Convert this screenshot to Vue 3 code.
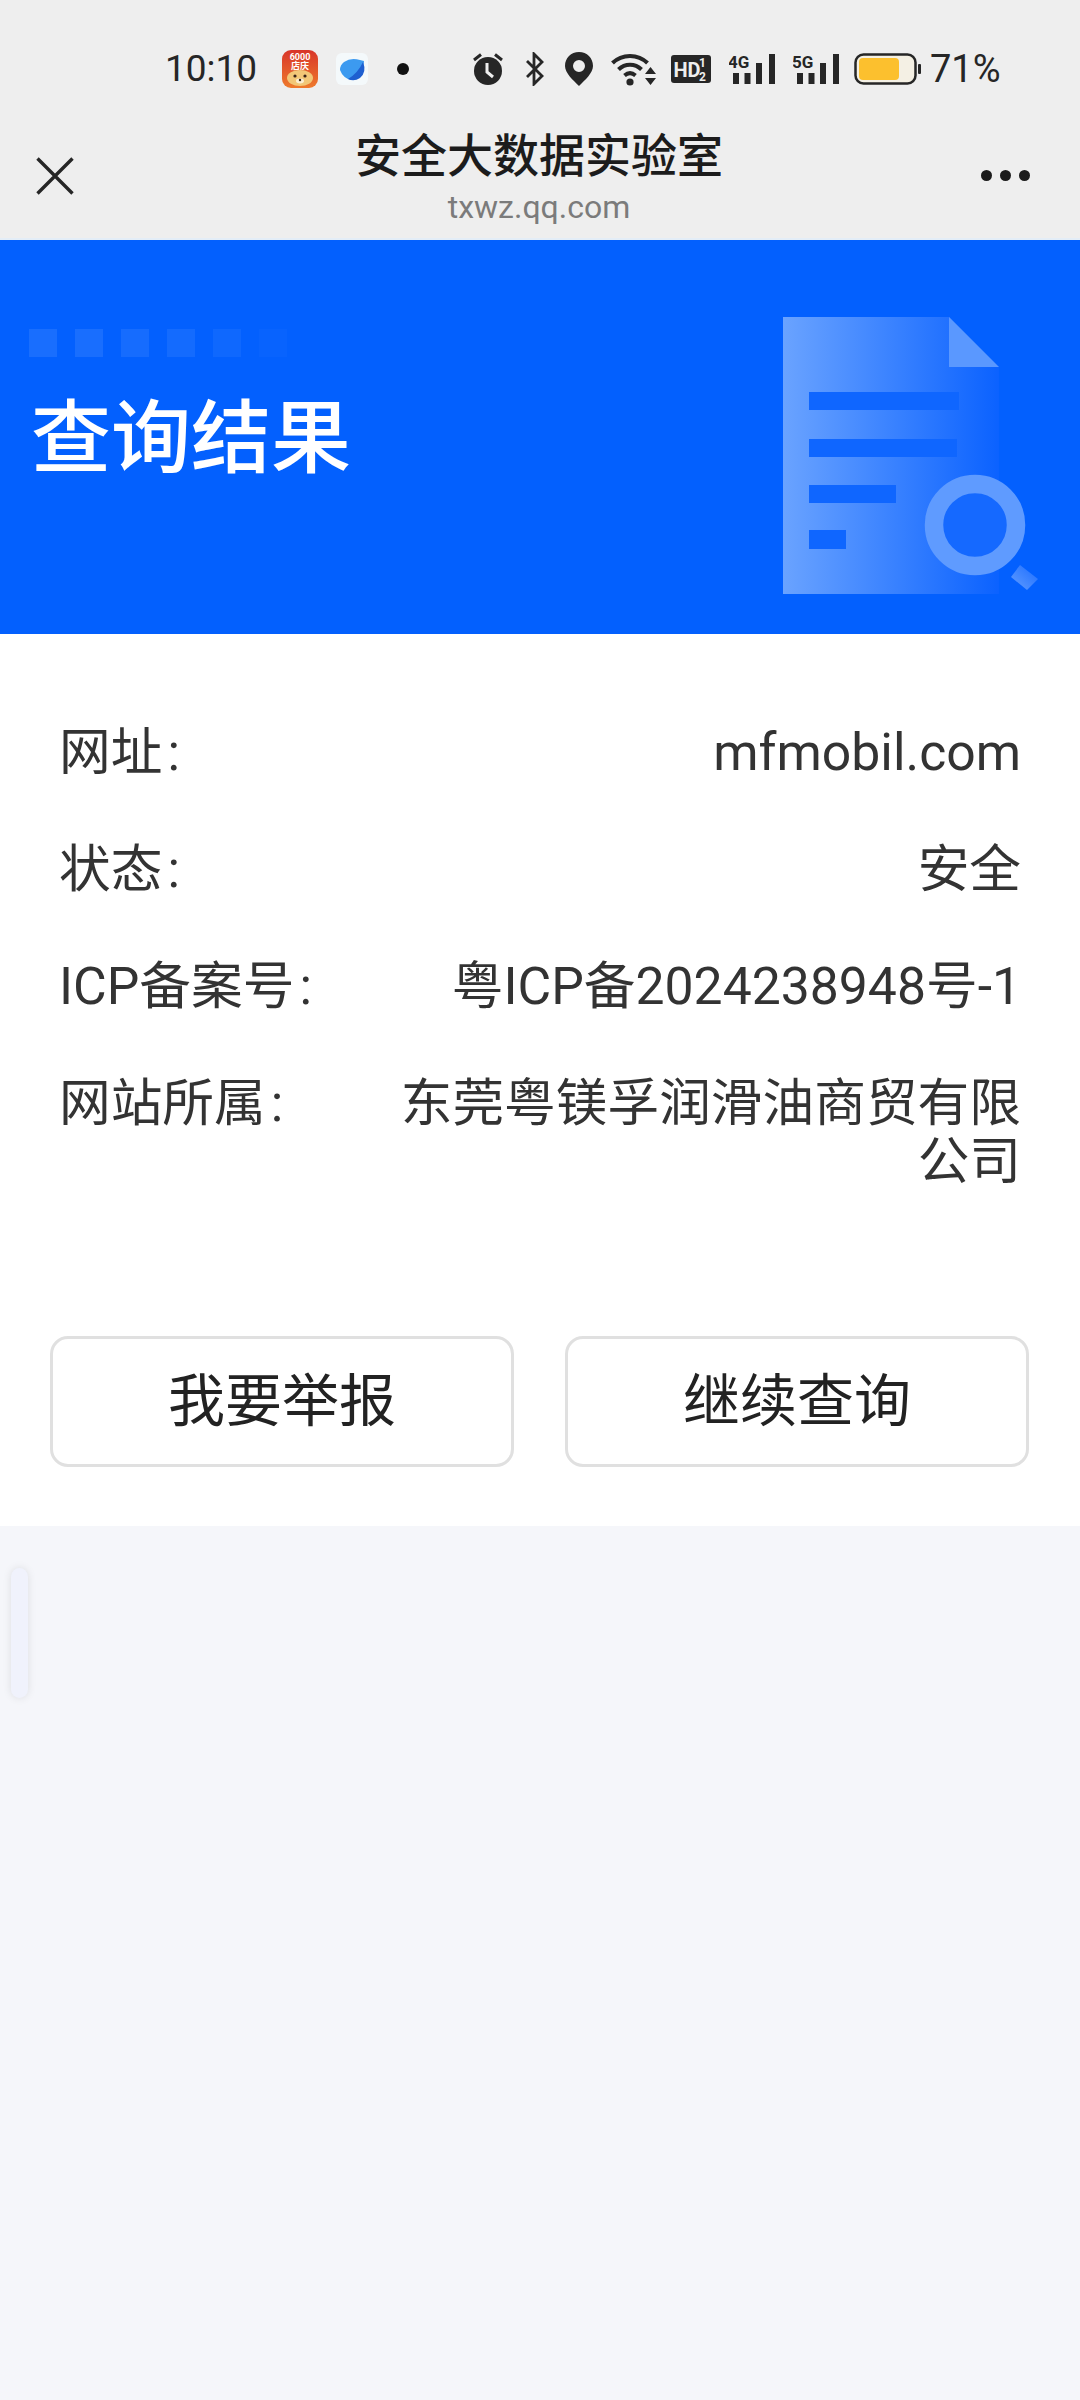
<script setup>
const rows = [
  { label: '网址', value: 'mfmobil.com' },
  { label: '状态', value: '安全' },
  { label: 'ICP备案号', value: '粤ICP备2024238948号-1' },
  { label: '网站所属', value: '东莞粤镁孚润滑油商贸有限公司' },
]
const squares = [0.09, 0.09, 0.08, 0.07, 0.05, 0.025]
const signals = ['4G', '5G']
</script>

<template>
  <div class="page">
    <div class="statusbar">
      <span class="time">10:10</span>

      <svg class="ic-tiger" width="36" height="38" viewBox="0 0 36 38">
        <defs>
          <linearGradient id="tigerBg" x1="0" y1="0" x2="0" y2="1">
            <stop offset="0" stop-color="#d8352a" />
            <stop offset="1" stop-color="#ee7a2c" />
          </linearGradient>
        </defs>
        <rect width="36" height="38" rx="9" fill="url(#tigerBg)" />
        <text x="18" y="10" text-anchor="middle" class="tiger-text">6000</text>
        <text x="18" y="19" text-anchor="middle" class="tiger-text">店庆</text>
        <ellipse cx="18" cy="28" rx="13" ry="8" fill="#f2c777" />
        <circle cx="13" cy="26" r="1.6" fill="#3a2418" />
        <circle cx="23" cy="26" r="1.6" fill="#3a2418" />
        <ellipse cx="18" cy="31" rx="4" ry="2.4" fill="#fbeed2" />
        <circle cx="18" cy="30" r="1.2" fill="#3a2418" />
      </svg>

      <svg class="ic-planet" width="32" height="32" viewBox="0 0 32 32">
        <rect width="32" height="32" rx="6" fill="#f4f9fb" />
        <path d="M8 9 Q15 4 24 7 L28 8 L27 17 Q24 26 15 27 Q7 25 4 17 Q4 12 8 9Z" fill="#3c9af0" />
        <path d="M12 26 Q22 20 27 9 Q31 19 24 25 Q18 29 12 26Z" fill="#1e5fd0" />
      </svg>

      <span class="dot"></span>

      <svg class="ic-alarm" width="30" height="34" viewBox="0 0 30 34">
        <circle cx="15" cy="19" r="14" fill="#262626" />
        <path d="M1 8 L8 2.5 M29 8 L22 2.5" stroke="#262626" stroke-width="3" />
        <path d="M14 11 V20 L20 25" fill="none" stroke="#eee" stroke-width="3" />
      </svg>

      <svg class="ic-bt" width="20" height="34" viewBox="0 0 20 34">
        <path d="M2 9 L17 24 L9 32 V2 L17 10 L2 25" fill="none" stroke="#262626" stroke-width="2.8" />
      </svg>

      <svg class="ic-pin" width="28" height="34" viewBox="0 0 28 34">
        <path fill-rule="evenodd" d="M14 0 C22 0 28 6 28 14 C28 21 20 28 14 34 C8 28 0 21 0 14 C0 6 6 0 14 0Z M14 8 A6 6 0 1 0 14 20 A6 6 0 1 0 14 8Z" fill="#262626" />
      </svg>

      <svg class="ic-wifi" width="46" height="34" viewBox="0 0 46 34">
        <g fill="none" stroke="#262626" stroke-width="4">
          <path d="M1.5 11 C11 1.5 27 1.5 36.5 11" />
          <path d="M7.5 17.5 C14 11 24 11 30.5 17.5" />
          <path d="M13.5 23.5 C17 20.5 21 20.5 24.5 23.5" />
        </g>
        <circle cx="19" cy="30" r="3.6" fill="#262626" />
        <path d="M34 22 L39.5 15 L45 22Z M34 26 L45 26 L39.5 33Z" fill="#262626" />
      </svg>

      <svg class="ic-hd" width="40" height="28" viewBox="0 0 40 28">
        <rect width="40" height="28" rx="3" fill="#262626" />
        <text x="2.5" y="22" class="hd-text">HD</text>
        <text x="28" y="12" class="hd-small">1</text>
        <text x="28" y="26" class="hd-small">2</text>
      </svg>

      <svg v-for="s in signals" :key="s" class="ic-signal" width="46" height="32" viewBox="0 0 46 32">
        <text x="-1" y="15" class="signal-text">{{ s }}</text>
        <rect x="4" y="20" width="6" height="11" fill="#262626" />
        <rect x="15.5" y="20" width="6" height="11" fill="#262626" />
        <rect x="27" y="10" width="6" height="21" fill="#262626" />
        <rect x="40" y="1" width="6" height="30" fill="#262626" />
      </svg>

      <svg class="ic-battery" width="67" height="32" viewBox="0 0 67 32">
        <rect x="1.5" y="1.5" width="60" height="29" rx="8" fill="#f4f0e4" stroke="#262626" stroke-width="2.5" />
        <rect x="5" y="5" width="40" height="22" rx="4" fill="#fcc02e" />
        <rect x="64" y="11" width="3" height="10" rx="1" fill="#262626" />
      </svg>

      <span class="percent">71%</span>
    </div>

    <div class="navbar">
      <svg class="close" width="38" height="38" viewBox="0 0 38 38">
        <path d="M1.5 1.5 L36.5 36.5 M36.5 1.5 L1.5 36.5" stroke="#262626" stroke-width="3.4" />
      </svg>
      <div class="nav-title">
        <div class="title">安全大数据实验室</div>
        <div class="url">txwz.qq.com</div>
      </div>
      <div class="more"><i></i><i></i><i></i></div>
    </div>

    <div class="banner">
      <div class="banner-text">
        <div class="squares">
          <span v-for="(o, i) in squares" :key="i" :style="{ opacity: o }"></span>
        </div>
        <h1>查询结果</h1>
      </div>
      <svg class="doc" width="260" height="290" viewBox="0 0 260 290">
        <defs>
          <linearGradient id="docFill" x1="0" y1="0" x2="1" y2="0">
            <stop offset="0" stop-color="#6aa3ff" />
            <stop offset="1" stop-color="#0b62ff" />
          </linearGradient>
          <linearGradient id="handleFill" x1="0" y1="1" x2="1" y2="0">
            <stop offset="0" stop-color="#629dff" />
            <stop offset="1" stop-color="#1a6cff" />
          </linearGradient>
        </defs>
        <path d="M0 0 H166 L216 50 V277 H0Z" fill="url(#docFill)" />
        <path d="M166 0 L216 50 H166Z" fill="#5a98ff" />
        <rect x="26" y="75" width="150" height="18" fill="#0f66ff" />
        <rect x="26" y="122" width="148" height="18" fill="#0f66ff" />
        <rect x="26" y="168" width="87" height="18" fill="#0f66ff" />
        <rect x="26" y="213" width="37" height="19" fill="#0f66ff" />
        <circle cx="192" cy="208" r="41" fill="#1569ff" stroke="#5f9bff" stroke-width="18.5" />
        <path d="M237 248 L255 262 L244 273 L228 260Z" fill="url(#handleFill)" />
      </svg>
    </div>

    <div class="result">
      <div v-for="r in rows" :key="r.label" class="row">
        <span class="label">{{ r.label }}<span class="colon">:</span></span>
        <span class="value">{{ r.value }}</span>
      </div>
      <div class="actions">
        <div class="btn">我要举报</div>
        <div class="btn">继续查询</div>
      </div>
    </div>

    <div class="edge-pill"></div>
  </div>
</template>

<style>
html, body { margin: 0; background: #f5f6fa; }
</style>

<style scoped>
.page {
  position: relative;
  width: 1080px;
  height: 2400px;
  overflow: hidden;
  background: #f5f6fa;
  font-family: Roboto, "Noto Sans CJK SC", sans-serif;
  color: #262626;
}

.statusbar {
  display: flex;
  align-items: center;
  height: 90px;
  padding: 48px 0 0 165px;
  box-sizing: border-box;
  background: #eeeeee;
}
.time { font-size: 37px; width: 117px; line-height: 44px; }
.ic-planet { margin-left: 18px; }
.dot { width: 12px; height: 12px; border-radius: 50%; background: #111; margin: 0 64px 0 29px; }
.ic-bt { margin-left: 22px; }
.ic-pin { margin-left: 20px; }
.ic-wifi { margin-left: 18px; }
.ic-hd { margin-left: 14px; }
.ic-signal { margin-left: 18px; }
.ic-battery { margin-left: 15px; }
.percent { font-size: 38px; margin-left: 9px; line-height: 42px; }

.tiger-text { font-size: 9px; fill: #fff; font-weight: 700; }
.hd-text { font-size: 20px; font-weight: 700; fill: #eee; font-family: "Liberation Sans Narrow", Roboto, sans-serif; }
.hd-small { font-size: 12px; font-weight: 700; fill: #eee; }
.signal-text { font-size: 17px; font-weight: 700; fill: #262626; }

.navbar {
  display: grid;
  grid-template-columns: 1fr auto 1fr;
  align-items: start;
  height: 150px;
  padding: 0 50px;
  box-sizing: border-box;
  background: #eeeeee;
  border-bottom: 2px solid #e3edf7;
}
.close { margin: 67px 0 0 -14px; }
.nav-title { text-align: center; padding: 33px 2px 0 0; }
.title { font-size: 46px; line-height: 58px; font-weight: 500; color: #1c1c1c; font-family: "Noto Sans CJK SC", sans-serif; }
.url { font-size: 32px; line-height: 42px; margin-top: 5px; color: #7b7b7b; }
.more { display: flex; justify-self: end; gap: 8px; margin-top: 80px; }
.more i { width: 11px; height: 11px; border-radius: 50%; background: #1c1c1c; }

.banner {
  display: flex;
  justify-content: space-between;
  height: 394px;
  padding: 77px 0 0 29px;
  box-sizing: border-box;
  background: #0360fe;
}
.banner-text { padding-top: 12px; }
.squares { display: flex; gap: 18px; }
.squares span { width: 28px; height: 28px; background: #fff; }
.banner h1 {
  margin: 24px 0 0 2px;
  font-size: 80px;
  line-height: 100px;
  font-weight: 500;
  color: #fff;
  font-family: "Noto Sans CJK SC", sans-serif;
}
.doc { margin-right: 37px; flex: none; }

.result { padding: 90px 59px 59px; background: #fff; }
.row {
  display: flex;
  justify-content: space-between;
  font-size: 51.7px;
  line-height: 58px;
  margin-bottom: 59px;
  color: #333;
}
.label { flex: none; }
.colon { margin-left: 5px; }
.value { width: 622px; text-align: right; }
.actions { display: flex; gap: 51px; margin: 145px -8px 0 -9px; }
.btn {
  flex: 1;
  height: 131px;
  line-height: 125px;
  box-sizing: border-box;
  border: 3px solid #e0e0e0;
  border-radius: 18px;
  text-align: center;
  font-size: 57px;
  color: #222;
}

.edge-pill {
  position: absolute;
  left: 11px;
  top: 1568px;
  width: 17px;
  height: 130px;
  border-radius: 9px;
  background: #f0f2fc;
  box-shadow: 0 0 8px rgba(0, 0, 0, 0.1);
}
</style>
